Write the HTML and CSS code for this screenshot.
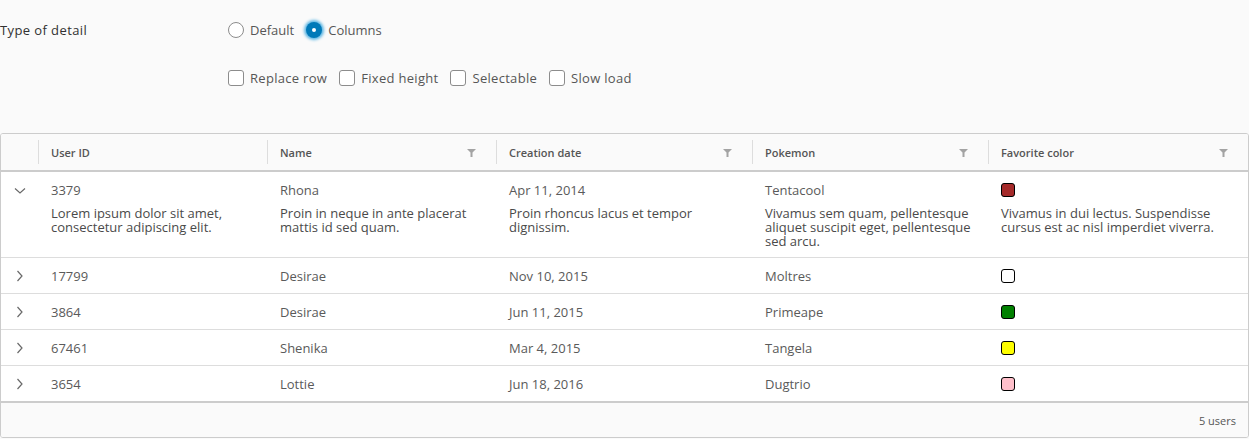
FILE: index.html
```html
<!DOCTYPE html>
<html lang="en">
<head>
<meta charset="utf-8">
<title>Datagrid detail</title>
<link rel="stylesheet" href="styles.css">
</head>
<body>
<div class="form">
  <div class="form-row">
    <div class="form-label">Type of detail</div>
    <div class="controls">
      <label class="opt"><span class="radio"></span>Default</label>
      <label class="opt"><span class="radio checked"></span>Columns</label>
    </div>
  </div>
  <div class="form-row">
    <div class="form-label"></div>
    <div class="controls checks">
      <label class="opt"><span class="check"></span>Replace row</label>
      <label class="opt"><span class="check"></span>Fixed height</label>
      <label class="opt"><span class="check"></span>Selectable</label>
      <label class="opt"><span class="check"></span>Slow load</label>
    </div>
  </div>
</div>

<div class="grid">
  <div class="row head">
    <div class="hcell first"></div>
    <div class="hcell">User ID</div>
    <div class="hcell">Name<svg class="filter" width="9" height="8" viewBox="0 0 9 8"><polygon points="0,0 9,0 5.5,3.5 5.5,8 3.5,8 3.5,3.5"/></svg></div>
    <div class="hcell">Creation date<svg class="filter" width="9" height="8" viewBox="0 0 9 8"><polygon points="0,0 9,0 5.5,3.5 5.5,8 3.5,8 3.5,3.5"/></svg></div>
    <div class="hcell">Pokemon<svg class="filter" width="9" height="8" viewBox="0 0 9 8"><polygon points="0,0 9,0 5.5,3.5 5.5,8 3.5,8 3.5,3.5"/></svg></div>
    <div class="hcell">Favorite color<svg class="filter" width="9" height="8" viewBox="0 0 9 8"><polygon points="0,0 9,0 5.5,3.5 5.5,8 3.5,8 3.5,3.5"/></svg></div>
  </div>

  <div class="row body expanded">
    <div class="cell toggle"><svg width="12" height="8" viewBox="0 0 12 8"><polyline points="1,1.5 6,6 11,1.5"/></svg></div>
    <div class="cell"><div>3379</div><div class="detail">Lorem ipsum dolor sit amet,<br>consectetur adipiscing elit.</div></div>
    <div class="cell"><div>Rhona</div><div class="detail">Proin in neque in ante placerat<br>mattis id sed quam.</div></div>
    <div class="cell"><div>Apr 11, 2014</div><div class="detail">Proin rhoncus lacus et tempor<br>dignissim.</div></div>
    <div class="cell"><div>Tentacool</div><div class="detail">Vivamus sem quam, pellentesque<br>aliquet suscipit eget, pellentesque<br>sed arcu.</div></div>
    <div class="cell"><div><span class="swatch c-brown"></span></div><div class="detail">Vivamus in dui lectus. Suspendisse<br>cursus est ac nisl imperdiet viverra.</div></div>
  </div>

  <div class="row body">
    <div class="cell toggle"><svg width="8" height="12" viewBox="0 0 8 12"><polyline points="1.5,1 6,6 1.5,11"/></svg></div>
    <div class="cell">17799</div>
    <div class="cell">Desirae</div>
    <div class="cell">Nov 10, 2015</div>
    <div class="cell">Moltres</div>
    <div class="cell"><span class="swatch c-white"></span></div>
  </div>
  <div class="row body">
    <div class="cell toggle"><svg width="8" height="12" viewBox="0 0 8 12"><polyline points="1.5,1 6,6 1.5,11"/></svg></div>
    <div class="cell">3864</div>
    <div class="cell">Desirae</div>
    <div class="cell">Jun 11, 2015</div>
    <div class="cell">Primeape</div>
    <div class="cell"><span class="swatch c-green"></span></div>
  </div>
  <div class="row body">
    <div class="cell toggle"><svg width="8" height="12" viewBox="0 0 8 12"><polyline points="1.5,1 6,6 1.5,11"/></svg></div>
    <div class="cell">67461</div>
    <div class="cell">Shenika</div>
    <div class="cell">Mar 4, 2015</div>
    <div class="cell">Tangela</div>
    <div class="cell"><span class="swatch c-yellow"></span></div>
  </div>
  <div class="row body last">
    <div class="cell toggle"><svg width="8" height="12" viewBox="0 0 8 12"><polyline points="1.5,1 6,6 1.5,11"/></svg></div>
    <div class="cell">3654</div>
    <div class="cell">Lottie</div>
    <div class="cell">Jun 18, 2016</div>
    <div class="cell">Dugtrio</div>
    <div class="cell"><span class="swatch c-pink"></span></div>
  </div>

  <div class="footer">5 users</div>
</div>
</body>
</html>
```

FILE: styles.css
```css
html, body {
  margin: 0;
  padding: 0;
  background: #fafafa;
}
body {
  font-family: "Open Sans", "Liberation Sans", sans-serif;
  font-size: 13px;
  color: #565656;
  width: 1249px;
}

/* form */
.form {
  padding-top: 20px;
}
.form-row {
  display: flex;
  align-items: center;
  height: 20px;
  margin-bottom: 28px;
}
.form-row:last-child {
  margin-bottom: 0;
}
.form-label {
  width: 228px;
  color: #313131;
  font-size: 13px;
  letter-spacing: 0.4px;
}
.controls {
  display: flex;
  align-items: center;
}
.checks .opt {
  letter-spacing: 0.3px;
}
.opt {
  display: flex;
  align-items: center;
  margin-right: 12px;
  line-height: 20px;
}
.radio {
  box-sizing: border-box;
  width: 16px;
  height: 16px;
  border: 1px solid #8c8c8c;
  border-radius: 50%;
  background: #fff;
  margin-right: 6px;
  display: flex;
  align-items: center;
  justify-content: center;
}
.radio.checked {
  border: none;
  background: #0079b8;
  box-shadow: 0 0 3px 2px #5bb5e3;
}
.radio.checked::after {
  content: "";
  width: 4px;
  height: 4px;
  border-radius: 50%;
  background: #fff;
}
.check {
  box-sizing: border-box;
  width: 16px;
  height: 16px;
  border: 1px solid #8c8c8c;
  border-radius: 3px;
  background: #fff;
  margin-right: 6px;
}

/* grid */
.grid {
  margin-top: 45px;
  border: 1px solid #ccc;
  border-radius: 3px;
  background: #fff;
  overflow: hidden;
}
.row {
  display: grid;
  grid-template-columns: 37px 229px 229px 256px 236px 1fr;
}
.head {
  background: #fafafa;
  padding: 6px 0;
  border-bottom: 2px solid #ccc;
}
.hcell {
  height: 24px;
  border-left: 1px solid #ddd;
  padding: 0 20px 0 12px;
  display: flex;
  align-items: center;
  justify-content: space-between;
  font-size: 11px;
  font-weight: 600;
  color: #555;
}
.hcell.first {
  border-left: none;
  padding: 0;
}
.filter {
  fill: #a3a3a3;
  margin-top: 1px;
}
.body {
  border-bottom: 1px solid #ddd;
}
.body.last {
  border-bottom: 2px solid #ccc;
}
.cell {
  padding: 11px 12px 10px 13px;
  line-height: 14px;
  color: #5a5a5a;
}
.cell.toggle {
  padding: 11px 0 10px 0;
  display: flex;
  justify-content: center;
  align-items: flex-start;
  height: 14px;
}
.toggle svg {
  fill: none;
  stroke: #6a6a6a;
  stroke-width: 1.2;
  margin-top: 1px;
}
.expanded .toggle svg {
  margin-top: 4px;
}
.detail {
  margin-top: 9px;
  line-height: 14px;
  color: #4a4a4a;
}
.expanded .cell {
  padding-bottom: 9px;
}
.swatch {
  display: inline-block;
  box-sizing: border-box;
  width: 14px;
  height: 14px;
  border: 1px solid #000;
  border-radius: 3px;
  vertical-align: top;
}
.c-brown { background: #a52a2a; }
.c-white { background: #fff; }
.c-green { background: #008000; }
.c-yellow { background: #ffff00; }
.c-pink { background: #ffc0cb; }

.footer {
  background: #fafafa;
  height: 34px;
  display: flex;
  align-items: center;
  justify-content: flex-end;
  padding-right: 12px;
  font-size: 11px;
  color: #565656;
}
```
